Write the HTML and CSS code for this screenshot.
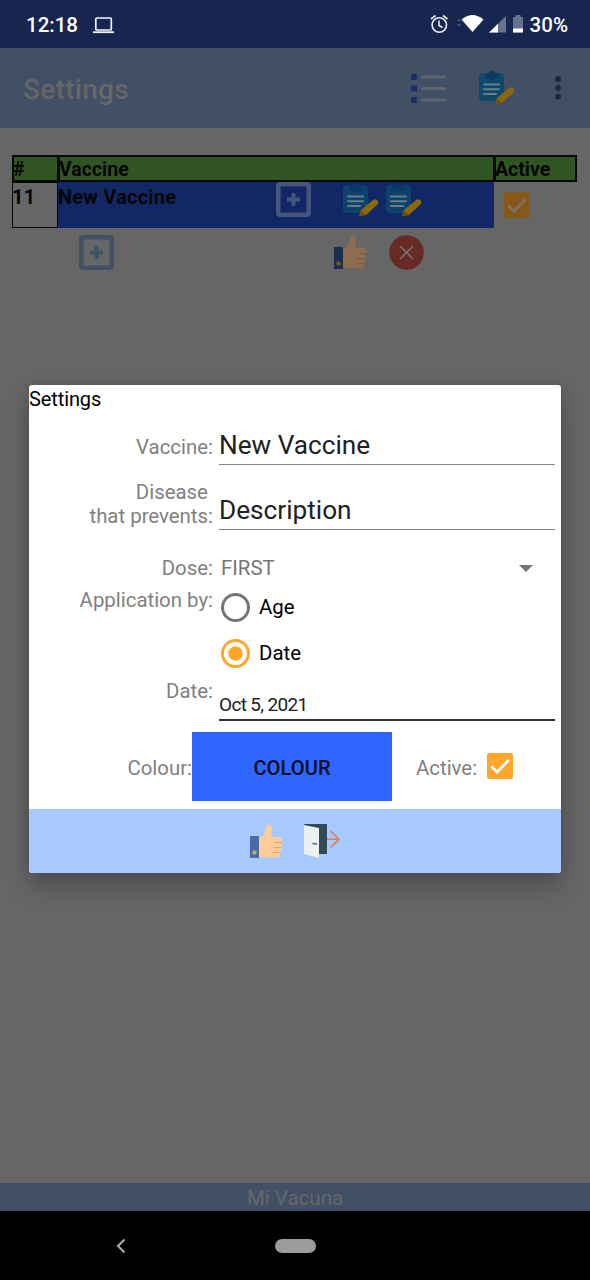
FILE: index.html
```html
<!DOCTYPE html>
<html lang="en">
<head>
<meta charset="utf-8">
<title>Settings</title>
<link rel="stylesheet" href="styles.css">
</head>
<body>
<svg class="defs" aria-hidden="true">
  <symbol id="add" viewBox="0 0 35 35">
    <path fill="currentColor" fill-rule="evenodd" d="M4 0H31Q35 0 35 4V31Q35 35 31 35H4Q0 35 0 31V4Q0 0 4 0ZM4.500 4.500V30.500H30.500V4.500Z"/>
    <path d="M17.500 11V24M11 17.500H24" stroke="currentColor" stroke-width="4"/>
  </symbol>
  <symbol id="note" viewBox="0 0 36 35">
    <path d="M4 3H21Q25 3 25 7V27L20 31H4Q0 31 0 27V7Q0 3 4 3Z" fill="var(--board)"/>
    <path d="M6 8Q5 3 9 3Q10 .5 12.500 .5Q15 .5 16 3Q20 3 19 8Q16 9.500 12.500 9.500Q9 9.500 6 8Z" fill="var(--clip)"/>
    <path d="M5 14.500H20M5 19.300H20M5 24H17" stroke="var(--lines)" stroke-width="2" stroke-linecap="round"/>
    <path d="M16 34L18 28L30 18Q33 16 35 19Q36 21 34 23L23 33Z" fill="var(--pencil)"/>
    <path d="M16 34L18 28L23 33Z" fill="var(--tip)"/>
  </symbol>
  <symbol id="thumb" viewBox="0 0 33 35">
    <path d="M9 14L14 11L16 2Q17 0 19 .5Q22 1 22 5L21 13H29Q32 13 32.500 16Q33 18 31.500 19Q33 21 31.300 23.500Q32 26 30 28Q31 31 28 33.500H15L9 33Z" fill="var(--skin)"/>
    <path d="M25 18.500H31.500M24 23.500H31M23 28.500H30" stroke="var(--crease)" stroke-width="1" stroke-linecap="round"/>
    <path d="M0 12H9V34H0Z" fill="var(--cuff)"/>
    <circle cx="4.500" cy="28.500" r="2.200" fill="var(--button)"/>
  </symbol>
  <symbol id="check" viewBox="0 0 26 26">
    <rect width="26" height="26" rx="2.500" fill="var(--box)"/>
    <path d="M4.200 13.300L10 19L22 7" fill="none" stroke="var(--mark)" stroke-width="2.700"/>
  </symbol>
</svg>

<div class="screen">
  <header class="status">
    <span class="clock">12:18</span>
    <svg class="laptop" viewBox="0 0 21 17"><rect x="2.800" y="1" width="15.500" height="12" rx="1" fill="none" stroke="#f3f5fa" stroke-width="1.700"/><path d="M0 15.200H21" stroke="#f3f5fa" stroke-width="1.800"/></svg>
    <svg class="signals" viewBox="0 0 96 20">
      <g fill="none" stroke="#e8ebf3" stroke-width="1.600"><circle cx="9.300" cy="11" r="7.200"/><path d="M9 6.500V11.500L12.500 13.500M1 5L5.500 1.500M13 1.500L17.500 5"/></g>
      <path d="M27.200 7L29 4.500L30.800 7ZM27.200 10L29 12.500L30.800 10Z" fill="#4d5a80"/>
      <path d="M31.500 5.500Q42.500-3.500 53.500 5.500L42.500 18Z" fill="#fff"/>
      <path d="M59 18.500L76 2V18.500Z" fill="#68718f"/><path d="M59 18.500L68 9.800V18.500Z" fill="#fff"/>
      <path d="M83 3H85.500V1H90.500V3H93V18.500H83Z" fill="#68718f"/><path d="M83 14.500H93V18.500H83Z" fill="#fff"/>
    </svg>
    <span class="battery">30%</span>
  </header>

  <div class="appbar">
    <h1 class="title">Settings</h1>
    <svg class="list-icon" viewBox="0 0 35 29"><path d="M0 0H6V6H0ZM0 11.500H6V17.500H0ZM0 23H6V29H0Z" fill="#1f2d66"/><path d="M11.500 3H34M11.500 14.500H34M11.500 26H34" stroke="#606368" stroke-width="3" stroke-linecap="round"/></svg>
    <svg class="note-icon bar-note"><use href="#note"/></svg>
    <svg class="more" viewBox="0 0 6 24"><g fill="#1b2938"><circle cx="3" cy="3" r="2.900"/><circle cx="3" cy="11.800" r="2.900"/><circle cx="3" cy="20.600" r="2.900"/></g></svg>
  </div>

  <main class="content">
    <div class="grid head">
      <div class="cell">#</div><div class="cell">Vaccine</div><div class="cell last">Active</div>
    </div>
    <div class="grid row">
      <div class="number">11</div>
      <div class="vaccine">
        <span class="name">New Vaccine</span>
        <svg class="add row-add"><use href="#add"/></svg>
        <svg class="note-icon"><use href="#note"/></svg>
        <svg class="note-icon"><use href="#note"/></svg>
      </div>
      <div class="active"><svg class="check dim"><use href="#check"/></svg></div>
    </div>
    <div class="actions">
      <svg class="add"><use href="#add"/></svg>
      <svg class="thumb dim-thumb"><use href="#thumb"/></svg>
      <svg class="cancel" viewBox="0 0 35 35"><circle cx="17.500" cy="17.500" r="17.300" fill="#672a24"/><path d="M11 11L24 24M24 11L11 24" stroke="#777272" stroke-width="1.600"/></svg>
    </div>
  </main>

  <footer class="brand">Mi Vacuna</footer>
  <nav class="nav">
    <svg class="back" viewBox="0 0 10 16"><path d="M8.500 1.500L2 8L8.500 14.500" fill="none" stroke="#aaa" stroke-width="2.100"/></svg>
    <span class="home"></span>
  </nav>

  <section class="dialog">
    <h2 class="dialog-title">Settings</h2>
    <div class="field vaccine-field"><span class="label">Vaccine:</span><span class="input">New Vaccine</span></div>
    <div class="field disease-field"><span class="label">Disease&nbsp;<br>that prevents:</span><span class="input">Description</span></div>
    <div class="field dose-field"><span class="label">Dose:</span><span class="select">FIRST<svg class="arrow" viewBox="0 0 14 7"><path d="M0 0H14L7 7Z" fill="#757575"/></svg></span></div>
    <div class="field apply-field">
      <span class="label">Application by:</span>
      <div class="radios">
        <div class="option"><span class="radio"></span>Age</div>
        <div class="option"><span class="radio on"></span>Date</div>
      </div>
    </div>
    <div class="field date-field"><span class="label">Date:</span><span class="input date">Oct 5, 2021</span></div>
    <div class="colour-row">
      <span class="colour-label">Colour:</span>
      <button class="colour">COLOUR</button>
      <span class="active-label">Active:</span>
      <svg class="check"><use href="#check"/></svg>
    </div>
    <div class="dialog-actions">
      <svg class="thumb"><use href="#thumb"/></svg>
      <svg class="exit" viewBox="0 0 36 35">
        <path d="M0 0H23V30H12Z" fill="#354a57"/>
        <path d="M0 1L15 4V34L0 30Z" fill="#ecf0f1"/>
        <path d="M8.500 19.500L13 20" stroke="#53636c" stroke-width="1.500"/>
        <path d="M23 15.300H35M26.500 7L35 15.300L26.500 23.500" fill="none" stroke="#df7b55" stroke-width="1.600"/>
      </svg>
    </div>
  </section>
</div>
</body>
</html>
```

FILE: styles.css
```css
* { box-sizing: border-box; }
body { margin: 0; font-family: Roboto, sans-serif; background: #666; }
svg { display: block; flex: none; }
.defs { position: absolute; width: 0; height: 0; }
.screen { position: relative; width: 590px; height: 1280px; display: flex; flex-direction: column; overflow: hidden; background: #666; }

.status { height: 48px; padding: 2px 22px 0 26px; display: flex; align-items: center; background: #17264f; color: #fff; font-size: 20.5px; font-weight: 500; }
.laptop { width: 21px; height: 17px; margin-left: 15px; }
.signals { width: 96px; height: 20px; margin: -3px 0 0 auto; }
.battery { margin-left: 4px; }

.appbar { height: 80px; padding: 0 29px 0 23px; display: flex; align-items: center; background: #425066; }
.title { margin: 2px auto 0 0; color: #666; font-size: 28px; font-weight: 500; letter-spacing: .3px; }
.list-icon { width: 35px; height: 29px; }
.bar-note { margin: -1px 40px 0 33px; }
.more { width: 6px; height: 24px; }

.note-icon { --board: #0f496a; --clip: #0d3c61; --lines: #6c7c86; --pencil: #8c680d; --tip: #705019; width: 36px; height: 35px; }
.content { flex: 1; padding: 27px 13px 0 12px; font-size: 20px; font-weight: 700; color: #050505; }
.grid { display: grid; grid-template-columns: 46px 436px 83px; }
.head { height: 27px; background: #305522; font-size: 19.5px; }
.cell { height: 27px; border: 2px solid #060806; line-height: 26px; margin-right: -1px; text-indent: -1px; }
.cell.last { margin-right: 0; }
.row { height: 46px; letter-spacing: .2px; }
.number { border: 1px solid #060606; line-height: 29px; text-indent: -1px; }
.vaccine { display: flex; align-items: flex-start; background: #122866; }
.name { line-height: 31px; width: 218px; }
.add { width: 35px; height: 35px; color: #425066; }
.row-add { margin-right: 32px; color: #46557b; }
.vaccine .note-icon + .note-icon { margin-left: 7px; }
.vaccine .note-icon { margin-top: 0; --board: #0c426b; --clip: #0b3a66; }
.active { padding: 10px; }
.check { --box: #ffa62b; --mark: #fff; width: 26px; height: 26px; }
.dim { --box: #885817; --mark: #77736d; }
.actions { display: flex; padding: 7px 0 0 67px; }
.thumb { --skin: #fdcc98; --crease: #dba878; --cuff: #486aa5; --button: #cda95d; width: 33px; height: 35px; }
.dim-thumb { --skin: #8c6d50; --crease: #765b43; --cuff: #1d2d4d; --button: #73592a; margin-left: 220px; }
.cancel { width: 35px; height: 35px; margin-left: 22px; }

.brand { height: 28px; line-height: 31px; background: #425066; color: #666; text-align: center; font-size: 20.5px; }
.nav { height: 69px; display: flex; align-items: center; padding-left: 116px; background: #000; }
.back { width: 10px; height: 16px; }
.home { width: 41px; height: 14px; margin-left: 149px; border-radius: 7px; background: #9b9b9b; }

.dialog { position: absolute; left: 29px; top: 385px; width: 532px; height: 488px; display: flex; flex-direction: column; overflow: hidden; border-radius: 3px; background: #fff; box-shadow: 0 14px 24px rgba(0,0,0,.22), 0 0 14px rgba(0,0,0,.13); color: #111; font-size: 20.4px; }
.dialog-title { height: 39px; margin: 0; font-size: 20px; font-weight: 400; line-height: 29px; letter-spacing: -.1px; color: #000; }
.field { display: grid; grid-template-columns: 184px 336px; column-gap: 6px; }
.label { text-align: right; color: #808080; line-height: 24px; }
.input { align-self: end; height: 40px; border-bottom: 1.500px solid #858585; font-size: 26.2px; line-height: 40px; color: #212121; }
.vaccine-field { height: 41px; }
.vaccine-field .label { padding-top: 11px; }
.disease-field { height: 65px; }
.disease-field .label { padding-top: 15px; }
.dose-field { height: 50px; align-items: end; }
.select { display: flex; align-items: center; justify-content: space-between; padding: 0 22px 0 2px; line-height: 24px; color: #757575; }
.arrow { width: 14px; height: 7px; }
.apply-field { height: 92px; }
.apply-field .label { padding-top: 8px; line-height: 24px; }
.radios { padding: 13px 0 0 2px; }
.option { display: flex; align-items: center; gap: 9px; height: 29px; margin-bottom: 17px; color: #000; line-height: 31px; }
.radio { width: 29px; height: 29px; border: 3px solid #757575; border-radius: 50%; }
.radio.on { border-color: #ffa62b; background: radial-gradient(circle, #ffa62b 6.800px, #fff 7.500px); }
.date-field { height: 49px; }
.date-field .label { padding-top: 7px; }
.input.date { height: 32px; border-bottom-width: 2px; font-size: 19px; line-height: 32px; letter-spacing: -.65px; border-color: #333; }
.colour-row { flex: 1; display: flex; align-items: center; padding-top: 2px; }
.colour-label { width: 163px; padding-top: 3px; text-align: right; color: #808080; }
.colour { width: 200px; height: 69px; border: 0; padding: 3px 0 0; background: #2e66ff; color: #080e22; font: 500 20.2px Roboto, sans-serif; }
.active-label { margin: 0 10px 0 24px; padding-top: 3px; color: #808080; }
.dialog-actions { height: 64px; display: flex; align-items: center; justify-content: center; gap: 21px; background: #a6c9ff; }
.exit { width: 36px; height: 35px; }
```
